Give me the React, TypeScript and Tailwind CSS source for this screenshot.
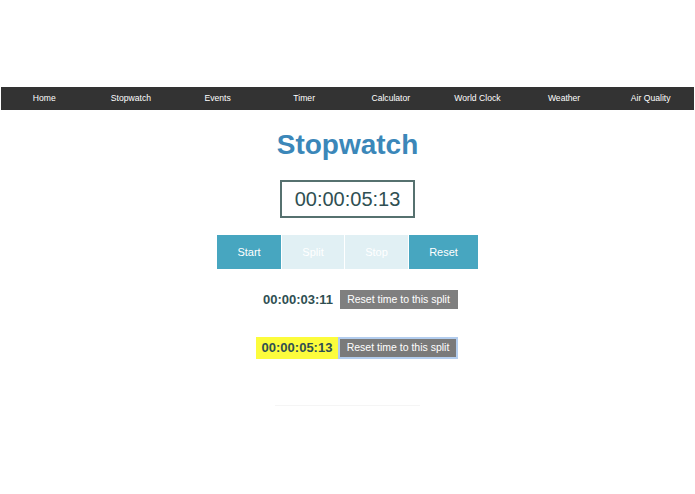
import React from "react";

const navItems = ["Home", "Stopwatch", "Events", "Timer", "Calculator", "World Clock", "Weather", "Air Quality"];

export default function App() {
  return (
    <div
      className="w-full h-[494px] bg-white overflow-hidden"
      style={{ fontFamily: '"Liberation Sans", Arial, Helvetica, sans-serif' }}
    >
      <div className="pt-[87px]">
        <nav className="mx-px h-[23px] bg-[#333333] grid grid-cols-8 items-center text-center text-white text-[8.6px]">
          {navItems.map((n) => (
            <div key={n}>{n}</div>
          ))}
        </nav>
      </div>

      <div className="flex flex-col items-center">
        <h1 className="mt-[19px] text-[28px] leading-[32px] font-bold text-[#3b87b9]">Stopwatch</h1>

        <div className="mt-[19px] w-[135px] h-[38px] border-2 border-[#56716f] flex items-center justify-center text-[20px] leading-[34px] text-[#2f4f52]">
          00:00:05:13
        </div>

        <div className="mt-[17px] flex gap-px h-[34px] text-[11px] text-white">
          <button className="w-[64px] h-full bg-[#47a6c0] flex items-center justify-center">Start</button>
          <button className="w-[62px] h-full bg-[#e1f0f4] flex items-center justify-center">Split</button>
          <button className="w-[63px] h-full bg-[#e1f0f4] flex items-center justify-center">Stop</button>
          <button className="w-[69px] h-full bg-[#47a6c0] flex items-center justify-center">Reset</button>
        </div>

        <div className="mt-[21px] pl-[19px] flex items-center">
          <span className="w-[83px] text-center text-[13px] font-bold text-[#2f4f52]">00:00:03:11</span>
          <button className="w-[118px] h-[19px] bg-[#7f7f7f] text-white text-[10.5px] flex items-center justify-center">
            Reset time to this split
          </button>
        </div>

        <div className="mt-[27px] pl-[19px] flex items-center">
          <span className="w-[82px] h-[22px] bg-[#fcfc3c] flex items-center justify-center text-[13px] font-bold text-[#2f4f52]">
            00:00:05:13
          </span>
          <button className="w-[120px] h-[22px] border-2 border-[#b3cdee] bg-[#7a7a7a] text-white text-[10.5px] flex items-center justify-center">
            Reset time to this split
          </button>
        </div>

        <div className="mt-[46px] w-[145px] h-px bg-[#f5f5f5]" />
      </div>
    </div>
  );
}
